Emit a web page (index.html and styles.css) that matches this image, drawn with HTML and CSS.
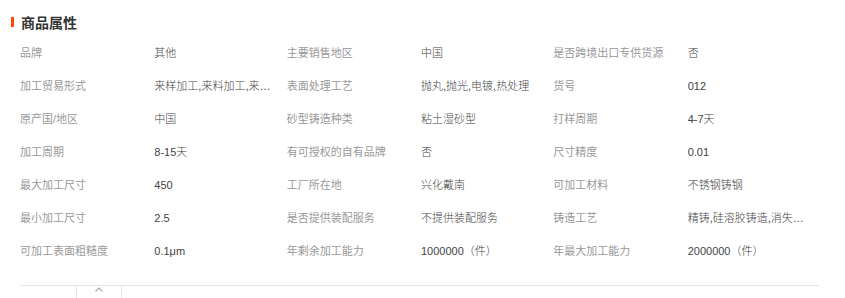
FILE: index.html
```html
<!DOCTYPE html>
<html lang="zh-CN">
<head>
<meta charset="utf-8">
<title>商品属性</title>
<link rel="stylesheet" href="styles.css">
</head>
<body>
<div class="panel">
  <div class="header"><span class="bar"></span><h2 class="title">商品属性</h2></div>
  <div class="attrs">
    <div class="lbl">品牌</div><div class="val"><span>其他</span></div>
    <div class="lbl">主要销售地区</div><div class="val"><span>中国</span></div>
    <div class="lbl">是否跨境出口专供货源</div><div class="val"><span>否</span></div>

    <div class="lbl">加工贸易形式</div><div class="val"><span>来样加工,来料加工,来图加工</span></div>
    <div class="lbl">表面处理工艺</div><div class="val"><span>抛丸,抛光,电镀,热处理</span></div>
    <div class="lbl">货号</div><div class="val"><span>012</span></div>

    <div class="lbl">原产国/地区</div><div class="val"><span>中国</span></div>
    <div class="lbl">砂型铸造种类</div><div class="val"><span>粘土湿砂型</span></div>
    <div class="lbl">打样周期</div><div class="val"><span>4-7天</span></div>

    <div class="lbl">加工周期</div><div class="val"><span>8-15天</span></div>
    <div class="lbl">有可授权的自有品牌</div><div class="val"><span>否</span></div>
    <div class="lbl">尺寸精度</div><div class="val"><span>0.01</span></div>

    <div class="lbl">最大加工尺寸</div><div class="val"><span>450</span></div>
    <div class="lbl">工厂所在地</div><div class="val"><span>兴化戴南</span></div>
    <div class="lbl">可加工材料</div><div class="val"><span>不锈钢铸钢</span></div>

    <div class="lbl">最小加工尺寸</div><div class="val"><span>2.5</span></div>
    <div class="lbl">是否提供装配服务</div><div class="val"><span>不提供装配服务</span></div>
    <div class="lbl">铸造工艺</div><div class="val"><span>精铸,硅溶胶铸造,消失模铸造</span></div>

    <div class="lbl">可加工表面粗糙度</div><div class="val"><span>0.1μm</span></div>
    <div class="lbl">年剩余加工能力</div><div class="val"><span>1000000（件）</span></div>
    <div class="lbl">年最大加工能力</div><div class="val"><span>2000000（件）</span></div>
  </div>
  <div class="footer">
    <button class="toggle" type="button" aria-label="收起">
      <svg width="8" height="5" viewBox="0 0 8 5"><path d="M0.5 4.5 L4 1 L7.5 4.5" fill="none" stroke="#aaa" stroke-width="1.2"/></svg>
    </button>
  </div>
</div>
</body>
</html>
```
FILE: styles.css
```css
html, body {
  margin: 0;
  padding: 0;
  background: #fff;
}
body {
  font-family: "Liberation Sans", "Noto Sans CJK SC", sans-serif;
  color: #333;
}
.panel {
  padding: 12px 0 0 11px;
}
.header {
  display: flex;
  align-items: center;
  height: 20px;
}
.bar {
  width: 3px;
  height: 10px;
  background: #ff4a00;
  margin-right: 7px;
}
.title {
  margin: 0;
  font-size: 14px;
  font-weight: bold;
  color: #333;
  line-height: 20px;
  font-family: "Noto Sans CJK SC", sans-serif;
}
.attrs {
  margin: 4px 0 0 9px;
  width: 800px;
  display: grid;
  grid-template-columns: repeat(6, 1fr);
  grid-auto-rows: 33px;
  font-size: 11px;
  line-height: 16px;
}
.lbl, .val {
  display: flex;
  align-items: center;
  min-width: 0;
  white-space: nowrap;
  overflow: hidden;
}
.lbl {
  color: #999;
  padding-right: 10px;
}
.val {
  color: #444;
  font-weight: 300;
  padding-left: 1px;
  padding-right: 14px;
}
.val span {
  display: block;
  min-width: 0;
  overflow: hidden;
  text-overflow: ellipsis;
}
.footer {
  margin: 18px 0 0 9px;
  width: 799px;
  border-top: 1px solid #e6e6e6;
  height: 20px;
}
.toggle {
  display: flex;
  align-items: flex-start;
  justify-content: center;
  margin-left: 56px;
  width: 46px;
  height: 20px;
  padding: 1px 0 0;
  background: #fff;
  border: none;
  border-left: 1px solid #e6e6e6;
  border-right: 1px solid #e6e6e6;
}
```
